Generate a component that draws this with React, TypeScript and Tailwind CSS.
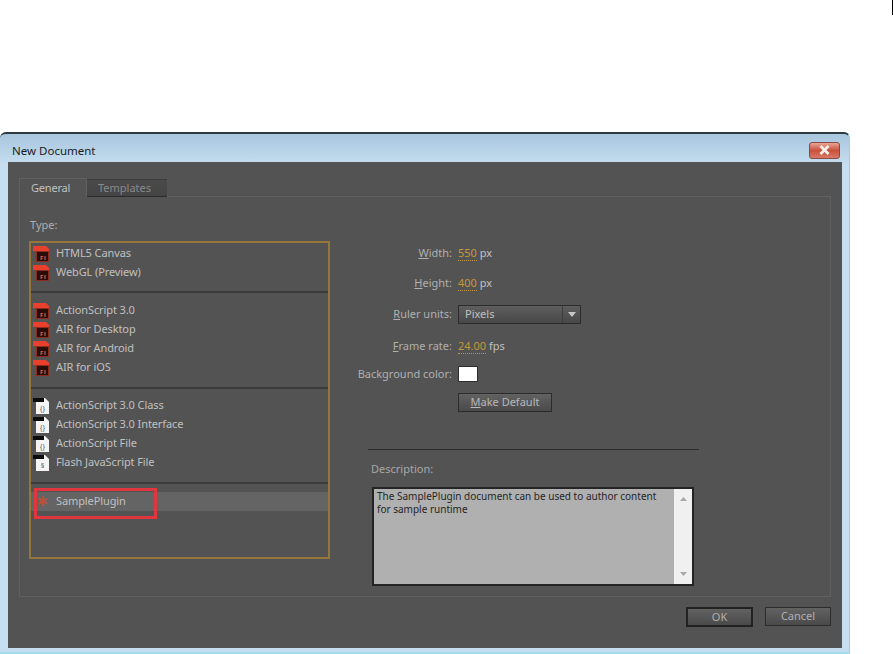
const font = "font-['Noto_Sans',sans-serif]";

function FlIcon() {
  return (
    <svg width="18" height="18" viewBox="0 0 18 18" className="shrink-0">
      <path d="M0 1h13l3 3v2H0z" fill="#e8402c" />
      <rect x="3.500" y="6.500" width="12" height="10" fill="#2a0c08" stroke="#8c2c1e" />
      <text x="7" y="15" fontSize="6" fontWeight="700" letterSpacing="0.6" fill="#e8604a" fontFamily="Noto Sans">Fl</text>
    </svg>
  );
}

function DocIcon({ glyph = "{}" }: { glyph?: string }) {
  return (
    <svg width="18" height="18" viewBox="0 0 18 18" className="shrink-0">
      <path d="M3 1h9l4 4v12H3z" fill="#f4f4f4" />
      <rect x="0" y="1" width="11" height="4" fill="#0c0c0c" />
      <text x="9.500" y="14" fontSize="7" textAnchor="middle" fill="#555" fontFamily="Noto Sans">{glyph}</text>
    </svg>
  );
}

function Row({ icon, label, selected }: { icon: React.ReactNode; label: string; selected?: boolean }) {
  return (
    <div className={`flex items-center h-[19px] pl-[2px] gap-[5px] ${selected ? "bg-[#646464]" : ""}`}>
      {icon}
      <span className="text-[11px] text-[#c0c0c0] whitespace-nowrap tracking-[-0.1px]">{label}</span>
    </div>
  );
}

function Field({ label, accessKey, children }: { label: string; accessKey?: string; children: React.ReactNode }) {
  const rest = accessKey ? label.slice(1) : label;
  return (
    <div className="flex items-center gap-[6px]">
      <span className="w-[122px] text-right text-[11px] text-[#b0b0b0] whitespace-nowrap">
        {accessKey && <span className="underline">{accessKey}</span>}
        {rest}:
      </span>
      {children}
    </div>
  );
}

function Value({ value, unit }: { value: string; unit: string }) {
  return (
    <span className="text-[11px] text-[#c0c0c0]">
      <span className="text-[#c4973c] border-b border-dotted border-[#c4973c]">{value}</span> {unit}
    </span>
  );
}

export default function App() {
  return (
    <div className={`relative w-[893px] h-[654px] bg-white overflow-hidden pt-[132px] ${font}`}>
      {/* stray cursor line top right */}
      <div className="absolute right-0 top-0 w-[1px] h-[15px] bg-black" />

      <div className="w-[850px] h-[522px] flex flex-col border-t-2 border-t-[#2c3a40] border-r border-r-[#8fd3e8] border-b-2 border-b-[#a4dcf0] rounded-t-[6px] bg-gradient-to-b from-[#a8c6de] from-0% to-[#c6def0] to-[6%] pl-[8px] pr-[7px] pb-[4px]">
        <div className="h-[28px] shrink-0 flex items-center justify-between pt-[4px] pl-[4px] pr-[2px]">
          <span className="mt-[1px] text-[11.500px] text-[#1c1c1c]">New Document</span>
          <div className="w-[31px] h-[17px] rounded-[3px] border border-[#8a4a44] bg-gradient-to-b from-[#e8a494] via-[#c8503c] to-[#d87a68] flex items-center justify-center">
            <svg width="13" height="10" viewBox="0 0 13 10">
              <path d="M2.500 1l8 8M10.500 1l-8 8" stroke="#f4f0ea" strokeWidth="2.800" />
            </svg>
          </div>
        </div>

        <div className="flex-1 flex flex-col bg-[#535353] pt-[16px] px-[11px]">
          {/* tabs */}
          <div className="flex h-[19px] shrink-0 items-end">
            <div className="w-[68px] h-[19px] flex items-center pl-[11px] border-t border-l border-r border-[#606060] text-[11px] text-[#c0c0c0] tracking-[-0.2px]">General</div>
            <div className="w-[80px] h-[18px] flex items-center pl-[11px] border-b border-b-[#2a2a2a] border-t border-t-[#3c3c3c] bg-gradient-to-b from-[#4a4a4a] to-[#444] text-[11px] text-[#8a8a8a]">Templates</div>
            <div className="flex-1 border-b border-[#606060]" />
          </div>

          <div className="h-[400px] shrink-0 flex border-l border-r border-b border-[#606060] pl-[9px] pr-[10px]">
            <div className="w-[301px] shrink-0">
              <div className="h-[44px] pt-[19px] pl-[1px] text-[11px] text-[#b0b0b0] leading-[18px]">Type:</div>
              <div className="h-[318px] border-2 border-[#94763c]">
                <div className="pt-[1px] pb-[9px] border-b-2 border-[#3a3a3a]">
                  <Row icon={<FlIcon />} label="HTML5 Canvas" />
                  <Row icon={<FlIcon />} label="WebGL (Preview)" />
                </div>
                <div className="pt-[8px] pb-[10px] border-b-2 border-[#3a3a3a]">
                  <Row icon={<FlIcon />} label="ActionScript 3.0" />
                  <Row icon={<FlIcon />} label="AIR for Desktop" />
                  <Row icon={<FlIcon />} label="AIR for Android" />
                  <Row icon={<FlIcon />} label="AIR for iOS" />
                </div>
                <div className="pt-[7px] pb-[10px] border-b-2 border-[#3a3a3a]">
                  <Row icon={<DocIcon />} label="ActionScript 3.0 Class" />
                  <Row icon={<DocIcon />} label="ActionScript 3.0 Interface" />
                  <Row icon={<DocIcon />} label="ActionScript File" />
                  <Row icon={<DocIcon glyph="§" />} label="Flash JavaScript File" />
                </div>
                <div className="relative pt-[8px]">
                  <Row selected label="SamplePlugin" icon={<span className="w-[18px] text-center text-[13px] leading-none text-[#b8523a]">✱</span>} />
                  {/* red annotation box */}
                  <div className="absolute left-[3px] top-[4px] w-[123px] h-[31px] border-[3px] border-[#e0363e]" />
                </div>
              </div>
            </div>

            <div className="flex-1 flex flex-col">
              <div className="flex flex-col pt-[47px]">
                <div className="h-[19px] flex items-center"><Field label="Width" accessKey="W"><Value value="550" unit="px" /></Field></div>
                <div className="h-[19px] mt-[11px] flex items-center"><Field label="Height" accessKey="H"><Value value="400" unit="px" /></Field></div>
                <div className="h-[19px] mt-[12px] flex items-center">
                  <Field label="Ruler units" accessKey="R">
                    <div className="w-[123px] h-[19px] flex items-center border border-[#2c2c2c] bg-gradient-to-b from-[#5e5e5e] to-[#484848] text-[11px] text-[#c0c0c0]">
                      <span className="flex-1 pl-[6px]">Pixels</span>
                      <span className="w-[18px] h-full flex items-center justify-center border-l border-[#3c3c3c]">
                        <svg width="8" height="5" viewBox="0 0 8 5"><path d="M0 0h8L4 5z" fill="#c8c8c8" /></svg>
                      </span>
                    </div>
                  </Field>
                </div>
                <div className="h-[19px] mt-[13px] flex items-center"><Field label="Frame rate" accessKey="F"><Value value="24.00" unit="fps" /></Field></div>
                <div className="h-[16px] mt-[10px] flex items-center">
                  <Field label="Background color">
                    <div className="w-[20px] h-[16px] bg-white border border-[#2c2c2c]" />
                  </Field>
                </div>
                <div className="mt-[11px] pl-[128px]">
                  <div className="w-[94px] h-[19px] flex items-center justify-center border border-[#2c2c2c] bg-gradient-to-b from-[#626262] to-[#4a4a4a] text-[11px] text-[#b8b8b8]">
                    <span><span className="underline">M</span>ake Default</span>
                  </div>
                </div>
              </div>

              <div className="mt-[37px] ml-[38px] w-[331px] border-t border-[#2e2e2e] pt-[10px] pl-[3px]">
                <div className="text-[11px] text-[#a8a8a8] leading-[18px]">Description:</div>
                <div className="mt-[9px] ml-[1px] w-[322px] h-[99px] flex border-2 border-[#242424] bg-[#b0b0b0]">
                  <p className="flex-1 px-[3px] py-[1px] text-[10px] leading-[13px] text-[#262626]">
                    The SamplePlugin document can be used to author content for sample runtime
                  </p>
                  <div className="w-[18px] bg-[#f0f0f0] flex flex-col items-center justify-between py-[8px]">
                    <svg width="7" height="4" viewBox="0 0 7 4"><path d="M3.500 0L7 4H0z" fill="#a8a8a8" /></svg>
                    <svg width="7" height="4" viewBox="0 0 7 4"><path d="M0 0h7L3.500 4z" fill="#a8a8a8" /></svg>
                  </div>
                </div>
              </div>
            </div>
          </div>

          {/* footer buttons */}
          <div className="flex justify-end items-start gap-[12px] pt-[10px]">
            <div className="w-[67px] h-[20px] flex items-center justify-center border-2 border-[#222] bg-gradient-to-b from-[#626262] to-[#4a4a4a] text-[11px] text-[#b0b0b0]">OK</div>
            <div className="w-[66px] h-[19px] flex items-center justify-center border border-[#2c2c2c] bg-gradient-to-b from-[#626262] to-[#4a4a4a] text-[11px] text-[#b0b0b0]">Cancel</div>
          </div>
        </div>
      </div>
    </div>
  );
}
